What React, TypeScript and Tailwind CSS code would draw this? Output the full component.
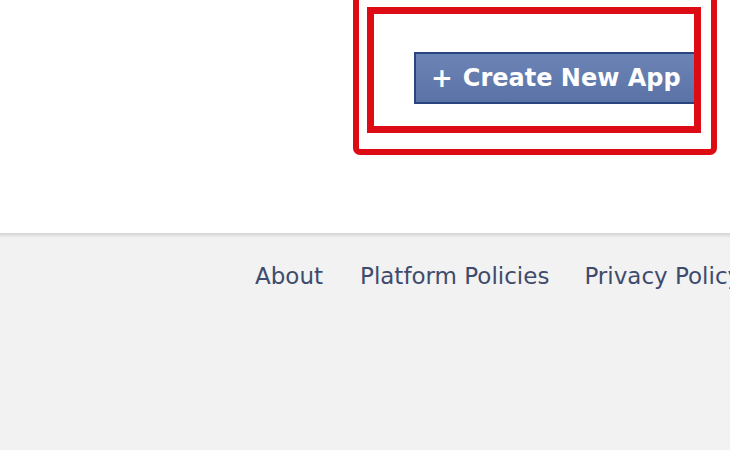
import React from "react";

export default function App() {
  return (
    <div className="w-[730px] h-[450px] overflow-hidden bg-white flex flex-col font-['DejaVu_Sans',sans-serif]">
      <div className="h-[233px] shrink-0 bg-white">
        <div className="-mt-[20px] ml-[353px] w-[364px] h-[175px] border-[6px] border-[#dc0b14] rounded-[7px] pl-[8px] pt-[21px]">
          <div className="w-[334px] h-[126px] border-[7px] border-[#dc0b14] overflow-hidden pl-[40px] pt-[38px] bg-white">
            <div className="w-[300px] h-[52px] border-2 border-[#29447e] bg-gradient-to-b from-[#6c84b5] to-[#5a72a6] flex items-center pl-[15px] text-white font-bold text-[24px] whitespace-nowrap">
              <span className="mr-[10px] text-[26px] leading-none">+</span>
              <span className="leading-none">Create New App</span>
            </div>
          </div>
        </div>
      </div>
      <div className="flex-1 bg-[#f2f2f2] relative">
        <div className="h-[5px] bg-gradient-to-b from-[#d4d4d4] to-[#f2f2f2]" />
        <div className="flex whitespace-nowrap pl-[255px] pt-[27px] text-[23px] text-[#3f4b6c] leading-none">
          <span>About</span>
          <span className="ml-[37px]">Platform Policies</span>
          <span className="ml-[35px]">Privacy Policy</span>
        </div>
      </div>
    </div>
  );
}
